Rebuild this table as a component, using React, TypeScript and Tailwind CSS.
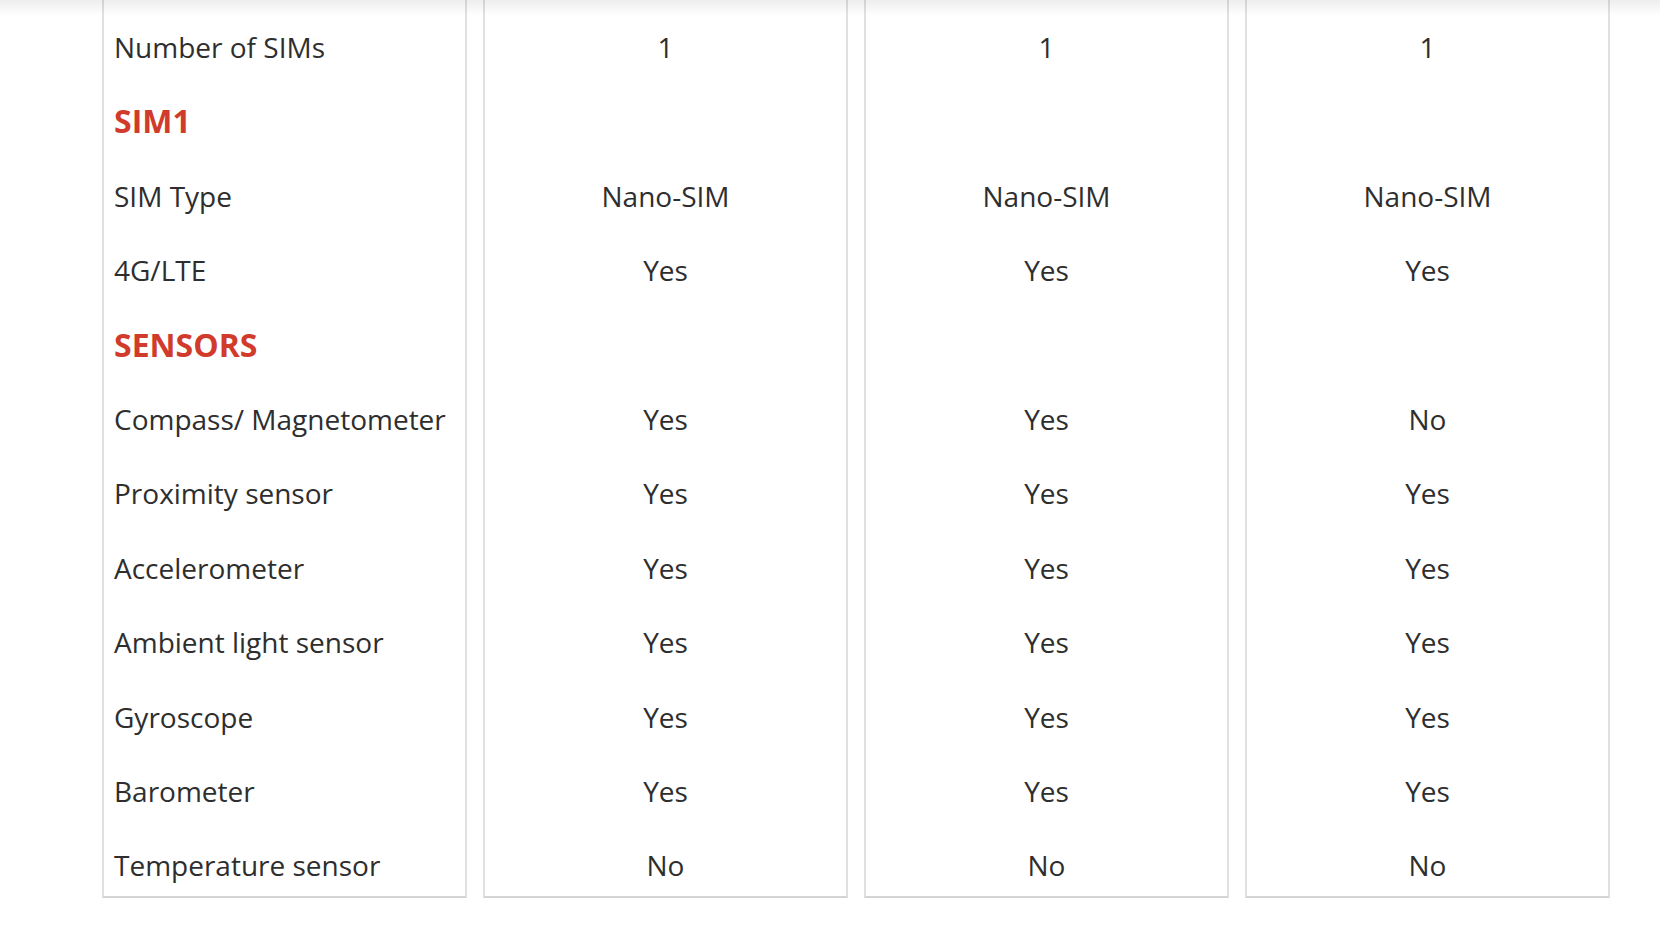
const rows: { label: string; heading?: boolean; values: string[] }[] = [
  { label: "Number of SIMs", values: ["1", "1", "1"] },
  { label: "SIM1", heading: true, values: ["", "", ""] },
  { label: "SIM Type", values: ["Nano-SIM", "Nano-SIM", "Nano-SIM"] },
  { label: "4G/LTE", values: ["Yes", "Yes", "Yes"] },
  { label: "SENSORS", heading: true, values: ["", "", ""] },
  { label: "Compass/ Magnetometer", values: ["Yes", "Yes", "No"] },
  { label: "Proximity sensor", values: ["Yes", "Yes", "Yes"] },
  { label: "Accelerometer", values: ["Yes", "Yes", "Yes"] },
  { label: "Ambient light sensor", values: ["Yes", "Yes", "Yes"] },
  { label: "Gyroscope", values: ["Yes", "Yes", "Yes"] },
  { label: "Barometer", values: ["Yes", "Yes", "Yes"] },
  { label: "Temperature sensor", values: ["No", "No", "No"] },
];

function Cell({ text, heading, last, center }: { text: string; heading?: boolean; last: boolean; center?: boolean }) {
  return (
    <div
      className={
        (last ? "h-[68px] " : "h-[74.4px] ") +
        "pt-[18px] leading-[38px] whitespace-nowrap " +
        (center ? "text-center " : "px-[10px] ") +
        (heading ? "text-[32px] font-bold text-[#d13b2c]" : "text-[28px] text-[#2e2e2e]")
      }
    >
      {text}
    </div>
  );
}

export default function App() {
  return (
    <div className="relative min-h-[942px] bg-white font-['Open_Sans',sans-serif]">
      <div className="flex gap-4 pl-[102px]">
        {/* Labels */}
        <div className="w-[365px] pt-[10px] border-x-2 border-b-2 border-x-[#e0e0e0] border-b-[#d4d4d4]">
          {rows.map((r, i) => (
            <Cell key={r.label} text={r.label} heading={r.heading} last={i === rows.length - 1} />
          ))}
        </div>

        {/* Phones */}
        {[0, 1, 2].map((col) => (
          <div
            key={col}
            className="w-[365px] pt-[10px] border-x-2 border-b-2 border-x-[#e0e0e0] border-b-[#d4d4d4]"
          >
            {rows.map((r, i) => (
              <Cell key={r.label} text={r.values[col]} last={i === rows.length - 1} center />
            ))}
          </div>
        ))}
      </div>

      {/* header shadow */}
      <div className="pointer-events-none absolute inset-x-0 top-0 h-4 bg-gradient-to-b from-black/[0.07] to-transparent" />
    </div>
  );
}
